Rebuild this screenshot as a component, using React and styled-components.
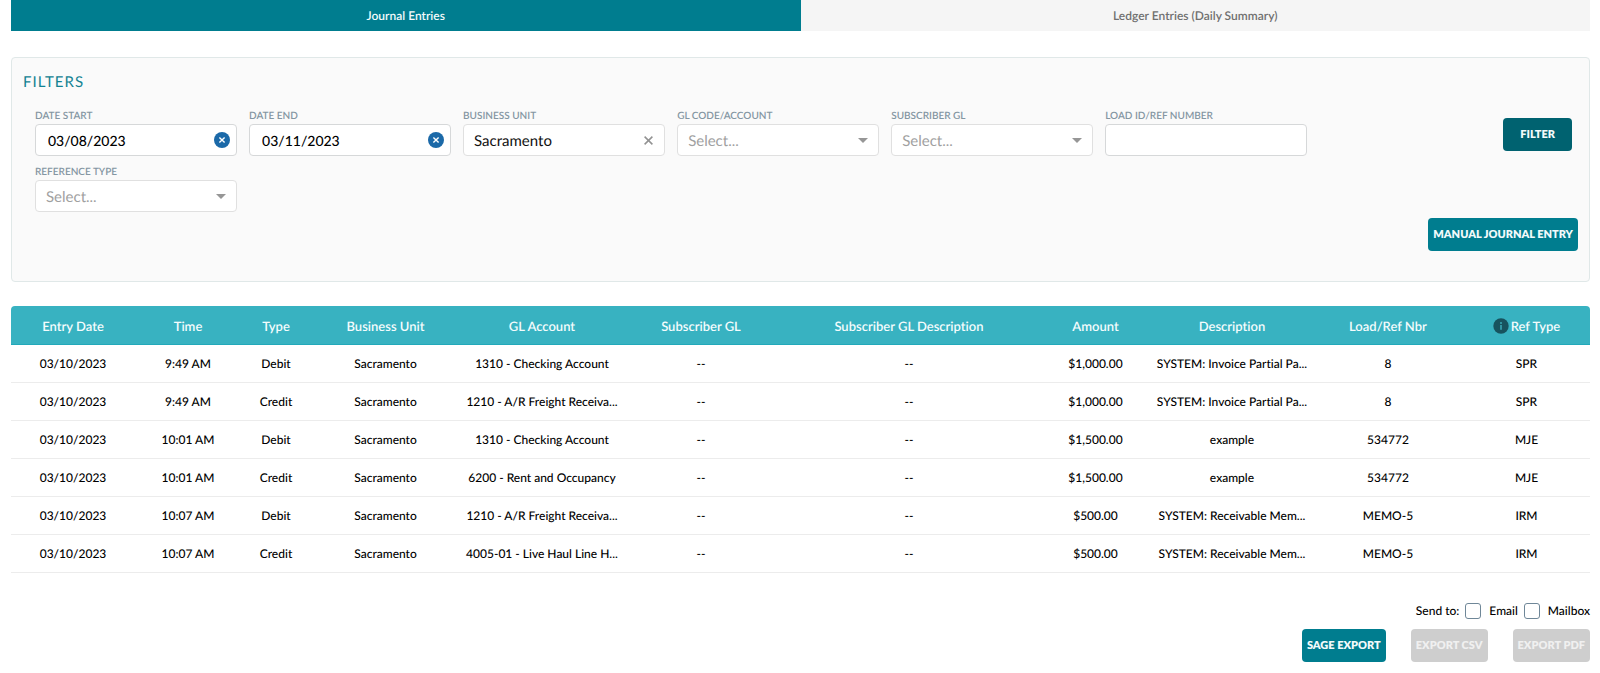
import React, { useState } from "react";
import styled, { createGlobalStyle, css } from "styled-components";

const GlobalStyle = createGlobalStyle`
  *, *::before, *::after { box-sizing: border-box; }
  body {
    margin: 0;
    background: #fff;
    color: #000;
    font: 500 12px/18px Lato, "Liberation Sans", sans-serif;
    font-variant-ligatures: none;
    text-rendering: geometricPrecision;
  }
  button, input, select { font-family: inherit; text-rendering: inherit; }
`;

const Page = styled.main`
  padding: 0 10px 12px 11px;
`;

const Tabs = styled.div`
  display: grid;
  grid-template-columns: 1fr 1fr;
`;

const Tab = styled.button`
  height: 31px;
  padding: 0;
  border: 0;
  font-size: 12px;
  font-weight: 600;
  color: ${(p) => (p.$active ? "#f2fafb" : "#707070")};
  background: ${(p) => (p.$active ? "#007d8f" : "#f5f5f5")};
`;

const Panel = styled.section`
  display: flex;
  flex-direction: column;
  margin-top: 26px;
  padding: 14px 11px 30px;
  border: 1px solid #e0e8e8;
  border-radius: 4px;
  background: #fafafa;
`;

const PanelTitle = styled.h2`
  margin: 0;
  font-size: 15px;
  font-weight: 400;
  line-height: 20px;
  letter-spacing: 1px;
  color: #128292;
`;

const FilterRow = styled.form`
  display: flex;
  align-items: flex-start;
  justify-content: space-between;
  gap: 196px;
  padding: 17px 6px 0 12px;
`;

const Fields = styled.div`
  flex: 1;
  display: grid;
  grid-template-columns: repeat(6, 1fr);
  gap: 9px 12px;
`;

const Field = styled.div`
  display: flex;
  flex-direction: column;
  gap: 1px;
  min-width: 0;
`;

const Label = styled.label`
  font-size: 10px;
  font-weight: 600;
  line-height: 14px;
  text-transform: uppercase;
  color: #8496a2;
`;

const Control = styled.div`
  position: relative;
  display: flex;
`;

const box = css`
  width: 100%;
  height: 32px;
  border-radius: 4px;
  background: #fff;
  outline: none;
`;

const TextInput = styled.input`
  ${box}
  padding: 0 36px 0 12px;
  border: 1px solid #d6d8d9;
  font-size: 14px;
  font-weight: 500;
  color: #000;
`;

const Select = styled.select`
  ${box}
  appearance: none;
  padding: 2px 30px 0 10px;
  border: 1px solid #e0e0e0;
  font-size: 15px;
  color: ${(p) => (p.$filled ? "#111" : "#a0a0a0")};
`;

const Adornment = styled.span`
  position: absolute;
  top: 0;
  right: ${(p) => p.$inset}px;
  height: 100%;
  display: flex;
  align-items: center;
  pointer-events: none;
`;

const ClearButton = styled.button`
  display: flex;
  padding: 0;
  border: 0;
  background: none;
  pointer-events: auto;
`;

const Button = styled.button`
  height: 33px;
  padding: 0 ${(p) => p.$pad || 5}px;
  border: 0;
  border-radius: 4px;
  font-size: 11px;
  font-weight: 800;
  white-space: nowrap;
  text-transform: uppercase;
  color: ${(p) => (p.disabled ? "#f0f0f0" : "#f2fafb")};
  background: ${(p) => (p.disabled ? "#cecece" : p.$dark ? "#006270" : "#007d8f")};
`;

const SubmitSlot = styled.div`
  padding-top: 9px;
`;

const PanelActions = styled.div`
  display: flex;
  justify-content: flex-end;
  margin-top: 6px;
`;

const Table = styled.table`
  width: 100%;
  margin-top: 24px;
  table-layout: fixed;
  border-collapse: separate;
  border-spacing: 0;
`;

const Th = styled.th`
  height: 39px;
  padding: 2px 0 0;
  font-size: 13px;
  font-weight: 600;
  white-space: nowrap;
  color: #f4fcfd;
  background: #38b2c1;
  border-bottom: 1px solid #22a9ba;
  &:first-child { border-top-left-radius: 4px; }
  &:last-child { border-top-right-radius: 4px; }
`;

const HeadContent = styled.span`
  display: flex;
  align-items: center;
  justify-content: center;
  gap: 2px;
`;

const Td = styled.td`
  height: 38px;
  padding: 0 2px;
  border-bottom: 1px solid #ececec;
  text-align: center;
  white-space: nowrap;
  overflow: hidden;
  text-overflow: ellipsis;
`;

const Footer = styled.footer`
  display: flex;
  flex-direction: column;
  align-items: flex-end;
  gap: 8px;
  margin-top: 28px;
`;

const SendTo = styled.div`
  display: flex;
  align-items: center;
  line-height: 20px;
`;

const CheckLabel = styled.label`
  display: flex;
  align-items: center;
  gap: 8px;
  margin-left: 6px;
`;

const Checkbox = styled.input`
  appearance: none;
  width: 16px;
  height: 16px;
  margin: 0;
  border: 1px solid #6f8798;
  border-radius: 3px;
  background: #fff;
  &:checked { background: #007d8f; }
`;

const Exports = styled.div`
  display: flex;
  gap: 25px;
`;

const CircleX = () => (
  <svg width="16" height="16" viewBox="0 0 16 16" aria-hidden="true">
    <circle cx="8" cy="8" r="8" fill="#1b69a8" />
    <path d="M5.4 5.4l5.2 5.2M10.6 5.4l-5.2 5.2" stroke="#fff" strokeWidth="1.4" />
  </svg>
);

const PlainX = () => (
  <svg width="9" height="9" viewBox="0 0 9 9" aria-hidden="true">
    <path d="M0.6 0.6l7.8 7.8M8.4 0.6L0.6 8.4" stroke="#929292" strokeWidth="1.5" />
  </svg>
);

const Caret = () => (
  <svg width="10" height="5" viewBox="0 0 10 5" aria-hidden="true">
    <path d="M0 0h10L5 5z" fill="#969696" />
  </svg>
);

const Info = () => (
  <svg width="16" height="16" viewBox="0 0 16 16" aria-hidden="true">
    <circle cx="8" cy="8" r="7.7" fill="#17535e" />
    <circle cx="8" cy="4.9" r="1" fill="#38a6b3" />
    <path d="M8 7v4.8" stroke="#38a6b3" strokeWidth="1.6" />
  </svg>
);

function DateField({ id, label, initial }) {
  const [value, setValue] = useState(initial);
  return (
    <Field>
      <Label htmlFor={id}>{label}</Label>
      <Control>
        <TextInput id={id} type="text" value={value} onChange={(e) => setValue(e.target.value)} />
        <Adornment $inset={7}>
          <ClearButton type="button" aria-label={`Clear ${label}`} onClick={() => setValue("")}>
            <CircleX />
          </ClearButton>
        </Adornment>
      </Control>
    </Field>
  );
}

function SelectField({ id, label, initial = "", options = [] }) {
  const [value, setValue] = useState(initial);
  return (
    <Field>
      <Label htmlFor={id}>{label}</Label>
      <Control>
        <Select id={id} value={value} $filled={value !== ""} onChange={(e) => setValue(e.target.value)}>
          <option value="">Select...</option>
          {options.map((o) => (
            <option key={o}>{o}</option>
          ))}
        </Select>
        <Adornment $inset={value ? 12 : 11}>
          {value ? (
            <ClearButton type="button" aria-label={`Clear ${label}`} onClick={() => setValue("")}>
              <PlainX />
            </ClearButton>
          ) : (
            <Caret />
          )}
        </Adornment>
      </Control>
    </Field>
  );
}

const columns = [
  ["Entry Date", 124],
  ["Time", 106],
  ["Type", 70],
  ["Business Unit", 149],
  ["GL Account", 164],
  ["Subscriber GL", 154],
  ["Subscriber GL Description", 262],
  ["Amount", 111],
  ["Description", 162],
  ["Load/Ref Nbr", 150],
  ["Ref Type", 127],
];

const unit = "Sacramento";
const rows = [
  ["03/10/2023", "9:49 AM", "Debit", unit, "1310 - Checking Account", "--", "--", "$1,000.00", "SYSTEM: Invoice Partial Pa...", "8", "SPR"],
  ["03/10/2023", "9:49 AM", "Credit", unit, "1210 - A/R Freight Receiva...", "--", "--", "$1,000.00", "SYSTEM: Invoice Partial Pa...", "8", "SPR"],
  ["03/10/2023", "10:01 AM", "Debit", unit, "1310 - Checking Account", "--", "--", "$1,500.00", "example", "534772", "MJE"],
  ["03/10/2023", "10:01 AM", "Credit", unit, "6200 - Rent and Occupancy", "--", "--", "$1,500.00", "example", "534772", "MJE"],
  ["03/10/2023", "10:07 AM", "Debit", unit, "1210 - A/R Freight Receiva...", "--", "--", "$500.00", "SYSTEM: Receivable Mem...", "MEMO-5", "IRM"],
  ["03/10/2023", "10:07 AM", "Credit", unit, "4005-01 - Live Haul Line H...", "--", "--", "$500.00", "SYSTEM: Receivable Mem...", "MEMO-5", "IRM"],
];

export default function App() {
  return (
    <Page>
      <GlobalStyle />
      <Tabs role="tablist">
        <Tab role="tab" aria-selected="true" $active>Journal Entries</Tab>
        <Tab role="tab" aria-selected="false">Ledger Entries (Daily Summary)</Tab>
      </Tabs>

      <Panel>
        <PanelTitle>FILTERS</PanelTitle>
        <FilterRow onSubmit={(e) => e.preventDefault()}>
          <Fields>
            <DateField id="date-start" label="Date Start" initial="03/08/2023" />
            <DateField id="date-end" label="Date End" initial="03/11/2023" />
            <SelectField id="unit" label="Business Unit" initial={unit} options={[unit]} />
            <SelectField id="gl" label="GL Code/Account" />
            <SelectField id="subscriber" label="Subscriber GL" />
            <Field>
              <Label htmlFor="load">Load ID/Ref Number</Label>
              <Control>
                <TextInput id="load" type="text" />
              </Control>
            </Field>
            <SelectField id="ref-type" label="Reference Type" />
          </Fields>
          <SubmitSlot>
            <Button type="submit" $dark $pad={17}>Filter</Button>
          </SubmitSlot>
        </FilterRow>
        <PanelActions>
          <Button type="button">Manual Journal Entry</Button>
        </PanelActions>
      </Panel>

      <Table>
        <colgroup>
          {columns.map(([name, width]) => (
            <col key={name} style={{ width: `${(width / 1579) * 100}%` }} />
          ))}
        </colgroup>
        <thead>
          <tr>
            {columns.map(([name]) => (
              <Th key={name} scope="col">
                <HeadContent>
                  {name === "Ref Type" && <Info />}
                  {name}
                </HeadContent>
              </Th>
            ))}
          </tr>
        </thead>
        <tbody>
          {rows.map((row, r) => (
            <tr key={r}>
              {row.map((cell, c) => (
                <Td key={c}>{cell}</Td>
              ))}
            </tr>
          ))}
        </tbody>
      </Table>

      <Footer>
        <SendTo>
          Send to:
          <CheckLabel><Checkbox type="checkbox" />Email</CheckLabel>
          <CheckLabel><Checkbox type="checkbox" />Mailbox</CheckLabel>
        </SendTo>
        <Exports>
          <Button type="button">Sage Export</Button>
          <Button type="button" disabled>Export CSV</Button>
          <Button type="button" disabled>Export PDF</Button>
        </Exports>
      </Footer>
    </Page>
  );
}
